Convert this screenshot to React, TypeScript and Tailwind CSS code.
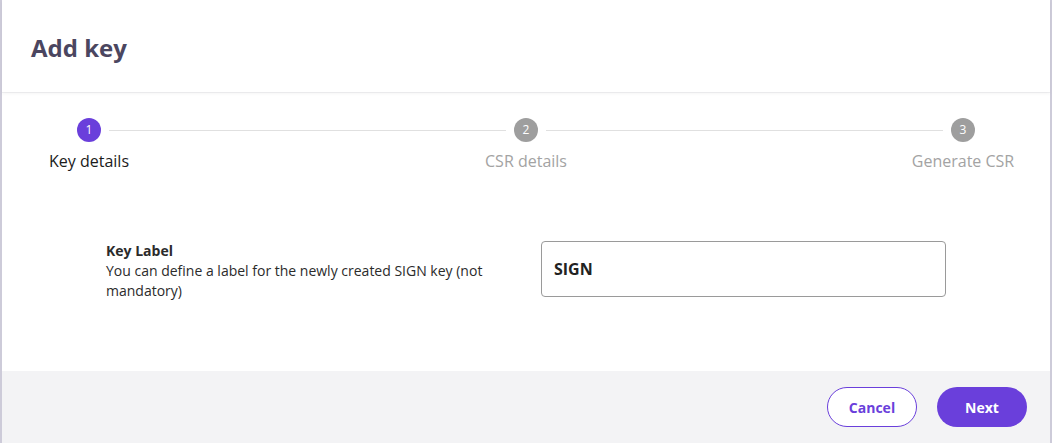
import React from "react";

const steps = [
  { n: 1, label: "Key details", active: true },
  { n: 2, label: "CSR details", active: false },
  { n: 3, label: "Generate CSR", active: false },
];

function Circle(props: { n: number; active: boolean }) {
  return (
    <div
      className={`flex h-6 w-6 shrink-0 items-center justify-center rounded-full text-[12px] leading-none text-white ${
        props.active ? "bg-[#6a3fdb]" : "bg-[#9e9e9e]"
      }`}
    >
      {props.n}
    </div>
  );
}

export default function App() {
  return (
    <div className="h-[443px] w-[1052px] overflow-hidden bg-white font-['Open_Sans',sans-serif]">
      <div className="flex h-full flex-col border-x-2 border-[#cdcbd9]">
        {/* header */}
        <div className="relative z-10 flex h-[92px] items-center px-[29px] pt-1 shadow-[0_2px_3px_rgba(0,0,0,0.04)]">
          <h1 className="text-[24px] font-bold text-[#4b4660]">Add key</h1>
        </div>

        {/* body */}
        <div className="h-[279px] border-t border-[#f2f2f4]">
          <div className="flex items-center px-[75px] pt-[25px]">
            <Circle n={1} active />
            <div className="mx-2 h-px flex-1 bg-[#e0e0e0]" />
            <Circle n={2} active={false} />
            <div className="mx-2 h-px flex-1 bg-[#e0e0e0]" />
            <Circle n={3} active={false} />
          </div>
          <div className="mt-[7px] flex px-[75px] text-[16px] leading-6">
            {steps.map((s, i) => (
              <React.Fragment key={s.n}>
                {i > 0 && <div className="flex-1" />}
                <div className="flex w-6 shrink-0 justify-center">
                  <span className={`whitespace-nowrap ${s.active ? "text-[#1b1b1b]" : "text-[#a3a3a3]"}`}>
                    {s.label}
                  </span>
                </div>
              </React.Fragment>
            ))}
          </div>

          <div className="mt-[68px] grid grid-cols-2 gap-[30px] pl-[104px] pr-[104px]">
            <div className="text-[14px] leading-5 text-[#2b2b2b]">
              <div className="font-bold">Key Label</div>
              <div>You can define a label for the newly created SIGN key (not mandatory)</div>
            </div>
            <div className="flex h-[56px] items-center rounded border border-[#9a9a9a] px-3 text-[16px] font-bold text-[#222]">
              SIGN
            </div>
          </div>
        </div>

        {/* footer */}
        <div className="flex h-[72px] items-center justify-end gap-5 bg-[#f3f3f5] pr-[23px]">
          <button className="h-10 w-[90px] rounded-full border border-[#6a3fdb] bg-white text-[14px] font-bold text-[#6a3fdb]">
            Cancel
          </button>
          <button className="h-10 w-[90px] rounded-full bg-[#6a3fdb] text-[14px] font-bold text-white">
            Next
          </button>
        </div>
      </div>
    </div>
  );
}
